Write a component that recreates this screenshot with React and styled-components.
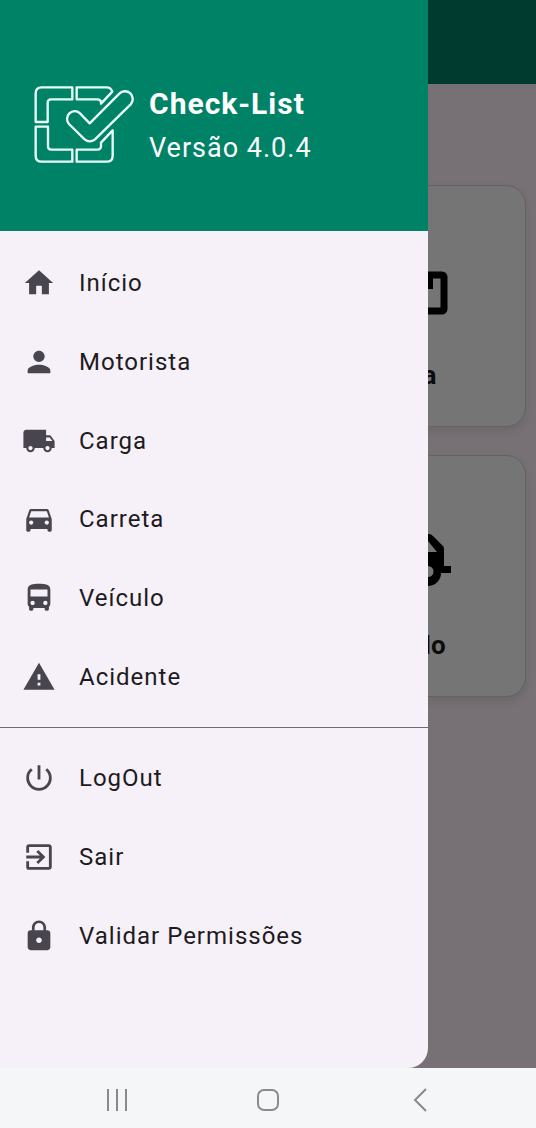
import React from 'react';
import styled, { createGlobalStyle } from 'styled-components';
import {
  MdHome,
  MdPerson,
  MdLocalShipping,
  MdDirectionsCar,
  MdDirectionsBus,
  MdWarning,
  MdPowerSettingsNew,
  MdExitToApp,
  MdLock,
} from 'react-icons/md';

const GlobalStyle = createGlobalStyle`
  *, *::before, *::after { box-sizing: border-box; }
  body {
    margin: 0;
    font-family: Roboto, "Liberation Sans", sans-serif;
    color: #1d1b20;
  }
  button { font: inherit; color: inherit; border: 0; background: none; padding: 0; cursor: pointer; }
`;

const Screen = styled.div`
  min-height: 100vh;
  display: flex;
  flex-direction: column;
  background: #777175;
`;

/* The home page and the open drawer share one grid cell. */
const Stage = styled.div`
  flex: 1;
  display: grid;
  grid-template: 1fr / 1fr;
  > * { grid-area: 1 / 1; }
`;

const Home = styled.main`
  display: flex;
  flex-direction: column;
`;

const AppBar = styled.div`
  height: 84px;
  background: #003b30;
`;

const CardGrid = styled.div`
  display: grid;
  grid-template-columns: 1fr 1fr;
  grid-auto-rows: 242px;
  gap: 28px 20px;
  padding: 101px 10px 0;
`;

const Card = styled.button`
  && {
    grid-column: 2;
    display: flex;
    flex-direction: column;
    align-items: center;
    justify-content: center;
    gap: 30px;
    padding-top: 35px;
    background: #757575;
    border: 1px solid #626262;
    border-radius: 20px;
    box-shadow: 0 4px 8px rgba(0, 0, 0, 0.1);
    color: #0c0c0c;
    font-size: 26px;
    line-height: 32px;
    font-weight: 700;
  }
`;

const CardIcon = styled.svg`
  width: 100px;
  height: 72px;
  display: block;
  color: #000;
`;

const Drawer = styled.aside`
  width: calc(100% - 108px);
  background: #f6f1f9;
  border-radius: 0 0 20px 0;
`;

const DrawerHeader = styled.header`
  display: flex;
  align-items: center;
  gap: 13px;
  height: 231px;
  padding: 82px 16px 61px 32px;
  background: #008267;
  color: #fff;
  line-height: 44px;
`;

const Logo = styled.svg`
  width: 104px;
  height: 86px;
  flex: none;
`;

const Title = styled.h1`
  margin: 0;
  font-size: 30px;
  font-weight: 700;
  letter-spacing: 1px;
`;

const Version = styled.p`
  margin: 0;
  font-size: 27px;
  letter-spacing: 1px;
`;

const MenuList = styled.ul`
  list-style: none;
  margin: 0;
  padding: ${(p) => p.$top}px 0 11px;
  display: grid;
  grid-auto-rows: 1fr;
  height: ${(p) => p.$height}px;
`;

const MenuItem = styled.li`
  display: flex;
`;

const MenuLink = styled.a`
  flex: 1;
  display: flex;
  align-items: center;
  gap: 23px;
  padding: 0 22px;
  font-size: 24px;
  line-height: 32px;
  letter-spacing: 1px;
  color: #1d1b20;
  text-decoration: none;
  svg { width: 34px; height: 34px; flex: none; color: #49454f; }
`;

const Divider = styled.hr`
  margin: 0;
  border: 0;
  height: 1px;
  background: #6e6a72;
`;

const SystemBar = styled.nav`
  height: 60px;
  display: flex;
  justify-content: space-evenly;
  align-items: center;
  padding-top: 4px;
  background: #f5f6f8;
`;

const SystemButton = styled.button`
  width: 70px;
  height: 48px;
  display: flex;
  align-items: center;
  justify-content: center;
  svg { width: 24px; height: 24px; fill: none; stroke: #8a8a8c; stroke-width: 2; }
`;

const mainItems = [
  ['Início', MdHome],
  ['Motorista', MdPerson],
  ['Carga', MdLocalShipping],
  ['Carreta', MdDirectionsCar],
  ['Veículo', MdDirectionsBus],
  ['Acidente', MdWarning],
];

const accountItems = [
  ['LogOut', MdPowerSettingsNew],
  ['Sair', MdExitToApp],
  ['Validar Permissões', MdLock],
];

function Menu({ items, height, top }) {
  return (
    <MenuList $height={height} $top={top}>
      {items.map(([label, Icon]) => (
        <MenuItem key={label}>
          <MenuLink href="#">
            <Icon aria-hidden="true" />
            {label}
          </MenuLink>
        </MenuItem>
      ))}
    </MenuList>
  );
}

export default function App() {
  return (
    <Screen>
      <GlobalStyle />
      <Stage>
        <Home>
          <AppBar />
          <CardGrid>
            <Card type="button">
              <CardIcon viewBox="0 0 100 72" aria-hidden="true">
                <rect
                  x="8"
                  y="18"
                  width="84"
                  height="36"
                  rx="2"
                  fill="none"
                  stroke="currentColor"
                  strokeWidth="7"
                  strokeLinejoin="round"
                />
                <path d="M20 18h9v14h-9zM72 18h9v14h-9z" fill="currentColor" />
              </CardIcon>
              Carga
            </Card>
            <Card type="button">
              <CardIcon viewBox="0 0 100 72" aria-hidden="true">
                <path
                  fillRule="evenodd"
                  fill="currentColor"
                  d="M2 45V12h60V7h15q2 0 4 2l10 10q1 1 1 3v17h7v7H89a13 13 0 0 1-26 0H36a13 13 0 0 1-26 0H2zM68 14v11h17L76 14zM76 39a5 5 0 1 0 0 11 5 5 0 0 0 0-11zM23 39a5 5 0 1 0 0 11 5 5 0 0 0 0-11z"
                />
              </CardIcon>
              Veículo
            </Card>
          </CardGrid>
        </Home>

        <Drawer>
          <DrawerHeader>
            <Logo
              viewBox="96 69 312 258"
              fill="none"
              stroke="#e9fffa"
              strokeWidth="7"
              strokeLinejoin="round"
              aria-hidden="true"
            >
              <path d="M217 82H125Q107 82 107 100V186H143V128Q143 118 153 118H217Z" />
              <path d="M230 82H320Q333 82 337 95L303 131V126Q302 118 292 118H230Z" />
              <path d="M107 200H144V259Q144 269 154 269H217V305H125Q107 305 107 287Z" />
              <path d="M338 211V287Q338 305 320 305H230V269H292Q303 269 303 258V248Z" />
              <path d="M269 190L358 101A23 23 0 0 1 392 133L285 238Q269 250 254 238L207 192A23 23 0 0 1 240 160Z" />
            </Logo>
            <div>
              <Title>Check-List</Title>
              <Version>Versão 4.0.4</Version>
            </div>
          </DrawerHeader>
          <Menu items={mainItems} height={496} top={13} />
          <Divider />
          <Menu items={accountItems} height={258} top={11} />
        </Drawer>
      </Stage>

      <SystemBar aria-label="Sistema">
        <SystemButton type="button" aria-label="Recentes">
          <svg viewBox="0 0 24 24"><path d="M3 1v22M12 1v22M21 1v22" /></svg>
        </SystemButton>
        <SystemButton type="button" aria-label="Tela inicial">
          <svg viewBox="0 0 24 24"><rect x="2" y="2" width="20" height="20" rx="6" /></svg>
        </SystemButton>
        <SystemButton type="button" aria-label="Voltar">
          <svg viewBox="0 0 24 24"><path d="M18 1L7 12l11 11" /></svg>
        </SystemButton>
      </SystemBar>
    </Screen>
  );
}
